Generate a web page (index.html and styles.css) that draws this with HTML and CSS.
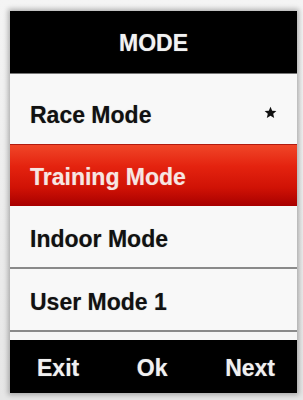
FILE: index.html
```html
<!DOCTYPE html>
<html>
<head>
<meta charset="utf-8">
<link rel="stylesheet" href="styles.css">
</head>
<body>
<div class="device">
  <div class="screen">
    <div class="header">MODE</div>
    <div class="row row-first">
      <span>Race Mode</span>
      <svg class="star" viewBox="0 0 24 24" width="13" height="13"><path d="M12 1.5l3.1 7.2 7.8.6-5.9 5.1 1.8 7.6L12 18l-6.8 4 1.8-7.6-5.9-5.1 7.8-.6z" fill="#111"/></svg>
    </div>
    <div class="row row-active"><span>Training Mode</span></div>
    <div class="row row-plain"><span>Indoor Mode</span></div>
    <div class="row row-plain"><span>User Mode 1</span></div>
    <div class="spacer"></div>
    <div class="footer">
      <span class="btn">Exit</span>
      <span class="btn">Ok</span>
      <span class="btn">Next</span>
    </div>
  </div>
</div>
</body>
</html>
```

FILE: styles.css
```css
html, body {
  margin: 0;
  padding: 0;
}
body {
  width: 303px;
  height: 400px;
  background: linear-gradient(#f4f4f4, #e6e6e6);
  font-family: "Liberation Sans", Arial, sans-serif;
  font-weight: bold;
  overflow: hidden;
}
.device {
  padding: 11px 6px 0 10px;
}
.screen {
  width: 287px;
  background: #f6f6f6;
  box-shadow: 0 0 5px 2px rgba(0, 0, 0, 0.28);
  display: flex;
  flex-direction: column;
}
.header {
  height: 63px;
  background: #000;
  color: #f2f2f2;
  font-size: 23px;
  display: flex;
  align-items: center;
  justify-content: center;
  border-bottom: 1px solid #777;
  box-sizing: border-box;
  padding-top: 2px;
  text-shadow: 0 0 1px rgba(255, 255, 255, 0.5);
}
.row {
  display: flex;
  align-items: center;
  justify-content: space-between;
  padding: 0 20px 0 20px;
  font-size: 23px;
  color: #111;
  box-sizing: border-box;
  text-shadow: 0 0 1px rgba(0, 0, 0, 0.35);
}
.row-first {
  height: 70px;
  padding-top: 12px;
  background: #f8f8f8;
}
.star {
  margin-top: -6px;
}
.row-active {
  height: 62px;
  padding-top: 3px;
  color: #f6e6e2;
  background: linear-gradient(#f04628 0%, #e4230f 35%, #d01205 70%, #a80000 100%);
  border-top: 1px solid #b21a10;
  text-shadow: 0 0 1px rgba(255, 255, 255, 0.4);
}
.row-plain {
  height: 63px;
  padding-top: 5px;
  background: #f8f8f8;
  border-bottom: 2px solid #8a8a8a;
}
.spacer {
  height: 8px;
  background: #f6f6f6;
}
.footer {
  height: 53px;
  background: #000;
  color: #f0f0f0;
  font-size: 23px;
  display: flex;
  align-items: center;
  justify-content: space-between;
  padding: 3px 22px 0 27px;
  box-sizing: border-box;
  text-shadow: 0 0 1px rgba(255, 255, 255, 0.5);
}
```
